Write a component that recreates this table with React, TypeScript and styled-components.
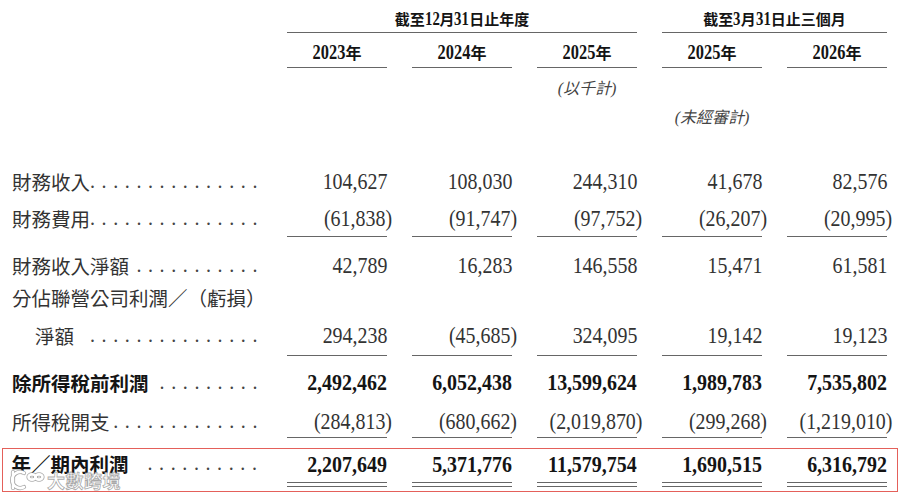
import { FC, ReactNode } from "react";
import styled, { createGlobalStyle } from "styled-components";

const serif = `"Liberation Serif", "Noto Sans CJK TC", serif`;
const ink = "#333";
const strong = "#141414";
const ruleColor = "#666";
const columns = "250px repeat(5, 100px)";

const GlobalStyle = createGlobalStyle`
  html, body {
    margin: 0;
    padding: 0;
    background: #fff;
  }
  body {
    width: 900px;
    height: 495px;
    overflow: hidden;
    font-family: ${serif};
    color: ${ink};
  }
`;

const Page = styled.div`
  width: 900px;
  height: 495px;
`;

const Row = styled.div<{ $h: number; $pt?: number; $inset?: number }>`
  display: grid;
  grid-template-columns: ${columns};
  column-gap: 25px;
  box-sizing: border-box;
  height: ${({ $h }) => $h}px;
  padding-top: ${({ $pt = 0 }) => $pt}px;
  padding-left: ${({ $inset = 12 }) => $inset}px;
`;

const Spacer = styled.div<{ $h: number }>`
  height: ${({ $h }) => $h}px;
`;

const Cell = styled.div<{ $rule?: boolean; $align?: "center" | "right"; $span?: number }>`
  display: flex;
  align-items: center;
  justify-content: ${({ $align }) => ($align === "center" ? "center" : "flex-end")};
  grid-column: span ${({ $span = 1 }) => $span};
  border-bottom: ${({ $rule }) => ($rule ? `1.4px solid ${ruleColor}` : "none")};
  white-space: nowrap;
  min-width: 0;
`;

const Label = styled.div<{ $bold?: boolean; $indent?: boolean; $pb?: number }>`
  display: flex;
  align-items: center;
  white-space: nowrap;
  font-size: 19.5px;
  font-weight: ${({ $bold }) => ($bold ? 700 : 400)};
  color: ${({ $bold }) => ($bold ? strong : ink)};
  padding-left: ${({ $indent }) => ($indent ? 23 : 0)}px;
  padding-bottom: ${({ $pb = 0 }) => $pb}px;
`;

const Leader = styled.span`
  margin-left: auto;
  margin-right: -2px;
  font-family: "Liberation Serif", serif;
  font-size: 20px;
  font-weight: 400;
  letter-spacing: 6.6px;
  color: #444;
`;

const HeadText = styled.span<{ $size: number }>`
  font-size: ${({ $size }) => $size}px;
  font-weight: 700;
  color: ${strong};
`;

const Note = styled.span`
  font-size: 16px;
  font-style: italic;
  color: #444;
`;

const Squeeze = styled.span<{ $size: number; $scale: number; $bold?: boolean }>`
  display: inline-block;
  font-family: "Liberation Serif", serif;
  font-size: ${({ $size }) => $size}px;
  font-weight: ${({ $bold }) => ($bold ? 700 : 400)};
  color: ${({ $bold }) => ($bold ? strong : ink)};
  line-height: 1;
  transform: scaleX(${({ $scale }) => $scale});
  transform-origin: center;
`;

const Highlight = styled.div`
  position: relative;
  margin: 10px 2px 0 2px;
  border: 1.5px solid #e4605a;
  padding-bottom: 3.7px;
`;

const TotalCell = styled.div`
  display: flex;
  flex-direction: column;
`;

const Figure = styled.div`
  flex: 1;
  display: flex;
  align-items: center;
  justify-content: flex-end;
  padding-bottom: 3.4px;
  white-space: nowrap;
`;

const DoubleRule = styled.div`
  height: 3.3px;
  border-top: 1.3px solid ${ruleColor};
  border-bottom: 1.3px solid ${ruleColor};
`;

const Watermark = styled.div`
  position: absolute;
  left: 6px;
  top: 18px;
  display: flex;
  align-items: center;
  gap: 2px;
  pointer-events: none;
`;

const WatermarkText = styled.span`
  font-family: "Noto Sans CJK TC", sans-serif;
  font-size: 18px;
  font-weight: 700;
  color: rgba(255, 255, 255, 0.95);
  -webkit-text-stroke: 0.8px rgba(140, 140, 140, 0.75);
  letter-spacing: 0.5px;
`;

// advance widths of Times-metric glyphs, in em
const widthEm = (s: string) =>
  [...s].reduce((w, c) => w + (/\d/.test(c) ? 0.5 : c === "(" || c === ")" ? 0.333 : 0.25), 0);

type CondensedProps = { text: string; size: number; scale: number; bold?: boolean; hang?: number };

const Condensed: FC<CondensedProps> = ({ text, size, scale, bold, hang = 0 }) => {
  const trim = ((1 - scale) / 2) * widthEm(text);
  return (
    <Squeeze
      $size={size}
      $scale={scale}
      $bold={bold}
      style={{ marginLeft: `${-trim}em`, marginRight: `calc(${-trim}em - ${hang}px)` }}
    >
      {text}
    </Squeeze>
  );
};

const Amount: FC<{ value: string; bold?: boolean }> = ({ value, bold }) => (
  <Condensed text={value} size={24} scale={0.83} bold={bold} hang={value.endsWith(")") ? 5 : 0} />
);

const Year: FC<{ year: string }> = ({ year }) => (
  <HeadText $size={16}>
    <Condensed text={year} size={20} scale={0.82} bold />年
  </HeadText>
);

type Line = {
  label: ReactNode;
  values: string[];
  dots?: number;
  bold?: boolean;
  indent?: boolean;
  rule?: boolean;
  h: number;
  pt?: number;
};

const lines: Line[] = [
  { label: "財務收入", dots: 15, values: ["104,627", "108,030", "244,310", "41,678", "82,576"], h: 38 },
  { label: "財務費用", dots: 15, values: ["(61,838)", "(91,747)", "(97,752)", "(26,207)", "(20,995)"], h: 37, rule: true },
  { label: "財務收入淨額", dots: 11, values: ["42,789", "16,283", "146,558", "15,471", "61,581"], h: 46, pt: 10 },
  { label: "分佔聯營公司利潤／（虧損）", values: [], h: 29 },
  { label: "淨額", indent: true, dots: 15, values: ["294,238", "(45,685)", "324,095", "19,142", "19,123"], h: 44, pt: 2, rule: true },
  { label: "除所得稅前利潤", bold: true, dots: 9, values: ["2,492,462", "6,052,438", "13,599,624", "1,989,783", "7,535,802"], h: 46, pt: 6 },
  { label: "所得稅開支", dots: 13, values: ["(284,813)", "(680,662)", "(2,019,870)", "(299,268)", "(1,219,010)"], h: 36, pt: 2, rule: true },
];

const totals = ["2,207,649", "5,371,776", "11,579,754", "1,690,515", "6,316,792"];

const BrandMark: FC = () => (
  <svg width="36" height="24" viewBox="0 0 36 24" fill="none">
    <g stroke="rgba(140,140,140,0.75)" strokeWidth="4.2" strokeLinecap="round">
      <path d="M4 4 V20" />
      <path d="M15 5 A8 8 0 1 0 15 19" />
      <ellipse cx="23" cy="9" rx="3.5" ry="2.6" />
      <ellipse cx="30" cy="9" rx="3.5" ry="2.6" />
    </g>
    <g stroke="#fff" strokeWidth="2.6" strokeLinecap="round">
      <path d="M4 4 V20" />
      <path d="M15 5 A8 8 0 1 0 15 19" />
      <ellipse cx="23" cy="9" rx="3.5" ry="2.6" />
      <ellipse cx="30" cy="9" rx="3.5" ry="2.6" />
    </g>
  </svg>
);

export default function App() {
  return (
    <Page>
      <GlobalStyle />
      <Row $h={33} $pt={4}>
        <div />
        <Cell $span={3} $align="center" $rule>
          <HeadText $size={15}>
            截至<Condensed text="12" size={19} scale={0.78} bold />月
            <Condensed text="31" size={19} scale={0.78} bold />日止年度
          </HeadText>
        </Cell>
        <Cell $span={2} $align="center" $rule>
          <HeadText $size={15}>
            截至<Condensed text="3" size={19} scale={0.78} bold />月
            <Condensed text="31" size={19} scale={0.78} bold />日止三個月
          </HeadText>
        </Cell>
      </Row>
      <Row $h={35} $pt={4}>
        <div />
        {["2023", "2024", "2025", "2025", "2026"].map((y, i) => (
          <Cell key={i} $align="center" $rule>
            <Year year={y} />
          </Cell>
        ))}
      </Row>
      <Row $h={36} $pt={2}>
        <div />
        <div />
        <div />
        <Cell $align="center">
          <Note>(以千計)</Note>
        </Cell>
      </Row>
      <Row $h={24}>
        <div />
        <div />
        <div />
        <div />
        <Cell $align="center">
          <Note>(未經審計)</Note>
        </Cell>
      </Row>
      <Spacer $h={34} />
      {lines.map((line, i) => (
        <Row key={i} $h={line.h} $pt={line.pt}>
          <Label $bold={line.bold} $indent={line.indent}>
            {line.label}
            {line.dots ? <Leader>{".".repeat(line.dots)}</Leader> : null}
          </Label>
          {line.values.map((v, j) => (
            <Cell key={j} $rule={line.rule}>
              <Amount value={v} bold={line.bold} />
            </Cell>
          ))}
        </Row>
      ))}
      <Highlight>
        <Row $h={38.3} $inset={8.5}>
          <Label $bold $pb={9.3}>
            年／期內利潤
            <Leader>{".".repeat(10)}</Leader>
          </Label>
          {totals.map((v, j) => (
            <TotalCell key={j}>
              <Figure>
                <Amount value={v} bold />
              </Figure>
              <DoubleRule />
            </TotalCell>
          ))}
        </Row>
        <Watermark>
          <BrandMark />
          <WatermarkText>大數跨境</WatermarkText>
        </Watermark>
      </Highlight>
    </Page>
  );
}
